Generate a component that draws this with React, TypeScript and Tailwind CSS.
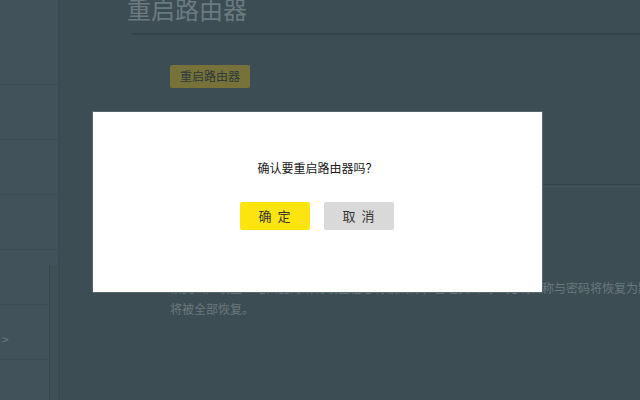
const FONT = { fontFamily: '"Noto Sans CJK SC", "Liberation Sans", sans-serif' };

const menuRows = [0, 1, 2, 3, 4, 5, 6];

function Sidebar() {
  return (
    <aside className="relative h-full w-[60px] shrink-0 bg-[#41525a] border-r-2 border-[#3a4a51]">
      <div className="pt-[30px]">
        {menuRows.map((row) => (
          <div key={row} className="h-[55px] border-b border-[#3c4c53] flex items-center">
            {row === 5 && <span className="pl-[2px] mt-[14px] text-[12px] text-[#6b787d]">&gt;</span>}
          </div>
        ))}
      </div>
      <div className="absolute right-[1px] top-[265px] bottom-0 w-[8px] bg-[#3e4f56] border-l border-[#37474e]" />
    </aside>
  );
}

function Page() {
  return (
    <main className="flex-1 h-full bg-[#3c4e54] overflow-hidden">
      <div className="pl-[67px]">
        <h1 className="text-[24px] leading-[28px] -mt-[5px] text-[#6c7a80]">重启路由器</h1>
        <div className="mt-[10px] ml-[5px] h-[2px] bg-[#33434a]" />
      </div>
      <div className="pl-[110px] pt-[27px]">
        <button className="h-[23px] w-[80px] rounded-[2px] bg-[#77723a] text-[12px] text-[#2e3a3b]">
          重启路由器
        </button>
      </div>
      <div className="ml-[109px] mt-[96px] h-[1px] bg-[#34444a]" />
      <div className="ml-[109px] h-[1px] mt-[1px] bg-[#44555b]" />
      <div className="pl-[110px] pt-[90px] text-[12px] leading-[21px] text-[#6b777a] whitespace-nowrap">
        <p>恢复出厂设置：路由器的所有设置信息将被清除，管理员密码、无线名称与密码将恢复为默认值，已安装的应用将被删除，</p>
        <p>将被全部恢复。</p>
      </div>
    </main>
  );
}

function ConfirmDialog() {
  return (
    <div className="fixed inset-0">
      <div className="absolute left-[92px] top-[111px] w-[451px] h-[182px] bg-white border border-[#56666c] flex flex-col items-center">
        <p className="mt-[48px] text-[12px] leading-[16px] text-[#1a1a1a]">确认要重启路由器吗？</p>
        <div className="mt-[26px] -ml-[2px] flex gap-[14px]">
          <button className="h-[28px] w-[70px] rounded-[2px] bg-[#fce40f] text-[13px] text-[#333] tracking-[6px] pl-[6px]">
            确定
          </button>
          <button className="h-[28px] w-[70px] rounded-[2px] bg-[#d9d9d9] text-[13px] text-[#333] tracking-[6px] pl-[6px]">
            取消
          </button>
        </div>
      </div>
    </div>
  );
}

export default function App() {
  return (
    <div className="relative flex h-[400px] w-[640px] overflow-hidden" style={FONT}>
      <Sidebar />
      <Page />
      <ConfirmDialog />
    </div>
  );
}
